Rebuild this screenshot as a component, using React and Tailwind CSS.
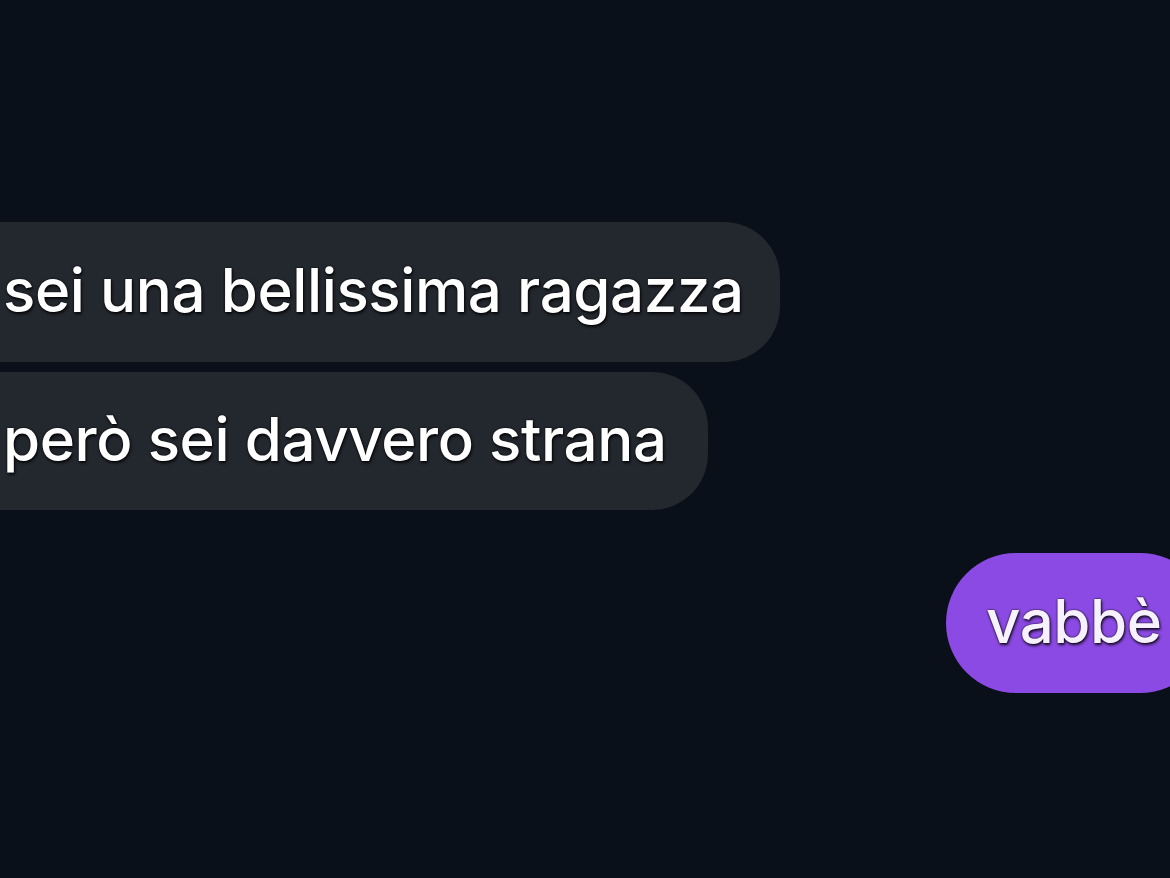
export default function App() {
  const shadow = { textShadow: "0 0 2px #000, 1px 2px 3px rgba(0,0,0,0.8)" };
  return (
    <div className="w-[1170px] h-[878px] overflow-hidden bg-[#0a1019] flex flex-col" style={{ fontFamily: 'Inter, "Liberation Sans", Arial, sans-serif' }}>
      <div className="h-[222px]" />
      <div className="flex flex-col items-start gap-[10px]">
        <div className="-ml-[60px] h-[140px] w-[840px] rounded-[56px] bg-[#23272e] flex items-center pl-[63px] pb-[4px]">
          <span className="text-white text-[60px] font-medium tracking-[-0.4px]" style={shadow}>sei una bellissima ragazza</span>
        </div>
        <div className="-ml-[60px] h-[138px] w-[768px] rounded-[56px] bg-[#23272e] flex items-center pl-[63px] pb-[4px]">
          <span className="text-white text-[60px] font-medium tracking-[-0.4px]" style={shadow}>però sei davvero strana</span>
        </div>
      </div>
      <div className="flex justify-end mt-[43px]">
        <div className="-mr-[40px] h-[140px] w-[264px] rounded-[70px] bg-[#8b4ae3] flex items-center pl-[40px] pb-[4px]">
          <span className="text-[#f6f0ff] text-[60px] font-medium tracking-[-0.4px]" style={shadow}>vabbè</span>
        </div>
      </div>
    </div>
  );
}
